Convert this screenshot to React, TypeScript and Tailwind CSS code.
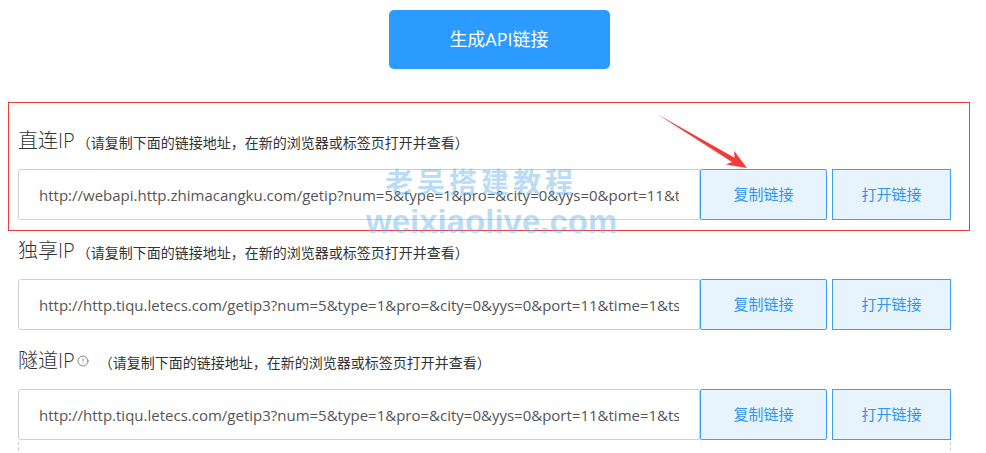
import { CircleAlert } from "lucide-react";

const FONT = { fontFamily: '"Microsoft YaHei", "Open Sans", "Noto Sans CJK SC", sans-serif' };

const HINT = "（请复制下面的链接地址，在新的浏览器或标签页打开并查看）";

type Row = { title: string; icon?: boolean; url: string };

const rows: Row[] = [
  {
    title: "直连IP",
    url: "http://webapi.http.zhimacangku.com/getip?num=5&type=1&pro=&city=0&yys=0&port=11&time=1&ts=0&ys=0&cs=0&lb=1&sb=0&pb=4&mr=1&regions=",
  },
  {
    title: "独享IP",
    url: "http://http.tiqu.letecs.com/getip3?num=5&type=1&pro=&city=0&yys=0&port=11&time=1&ts=0&ys=0&cs=0&lb=1&sb=0&pb=4&mr=1&regions=",
  },
  {
    title: "隧道IP",
    icon: true,
    url: "http://http.tiqu.letecs.com/getip3?num=5&type=1&pro=&city=0&yys=0&port=11&time=1&ts=0&ys=0&cs=0&lb=1&sb=0&pb=4&mr=1&regions=",
  },
];

function LinkRow({ row }: { row: Row }) {
  return (
    <div>
      {/* Title line */}
      <div className="flex h-7 items-baseline text-[#333]">
        <span className="text-[20px] font-light leading-7">{row.title}</span>
        {row.icon && (
          <CircleAlert size={12} strokeWidth={1.4} className="ml-[2px] self-center text-[#555]" />
        )}
        <span className={`text-[14px] ${row.icon ? "ml-[10px]" : "ml-[2px]"}`}>{HINT}</span>
      </div>

      {/* Input + buttons */}
      <div className="mt-[14px] flex h-[51px]">
        <input
          readOnly
          value={row.url}
          className="h-full w-[682px] rounded-l-[3px] border border-[#ccd0d9] bg-white px-5 text-[15px] text-[#555] outline-none"
          style={FONT}
        />
        <button className="h-full w-[127px] rounded-[2px] border border-[#3a9ff5] bg-[#e8f4fd] text-[15px] text-[#2e95f0]">
          复制链接
        </button>
        <button className="ml-[5px] h-full w-[119px] border border-[#3a9ff5] bg-[#e8f4fd] text-[15px] text-[#2e95f0]">
          打开链接
        </button>
      </div>
    </div>
  );
}

export default function App() {
  return (
    <div className="relative h-[453px] w-[986px] overflow-hidden bg-white" style={FONT}>
      <div className="flex justify-center pl-[12px] pt-[10px]">
        <button className="h-[59px] w-[221px] rounded-[5px] bg-[#2b9bff] text-[18px] text-white">
          生成API链接
        </button>
      </div>

      <div className="ml-[18px] mt-[58px] flex w-[933px] flex-col gap-[17px]">
        {rows.map((r) => (
          <LinkRow key={r.title} row={r} />
        ))}
        <div className="-mt-[15px] h-[14px] border-x border-dashed border-[#ccc]" />
      </div>

      {/* Annotation: red box */}
      <div className="pointer-events-none absolute left-[8px] top-[102px] h-[129px] w-[962px] border border-[#ef3b3b]" />

      {/* Annotation: red arrow */}
      <svg className="pointer-events-none absolute left-0 top-0" width="986" height="453">
        <polygon
          points="657,114 732,161.9 725.8,164.6 747,168 734,150.8 734.6,157.7"
          fill="#f03c3c"
        />
      </svg>

      {/* Watermark */}
      <div className="pointer-events-none absolute left-[385px] top-[164px] select-none">
        <div
          className="text-[28px] font-bold leading-[34px] tracking-[4px] text-[rgba(100,175,230,0.45)]"
          style={{ fontFamily: '"Noto Sans CJK SC", sans-serif' }}
        >
          老吴搭建教程
        </div>
        <div
          className="-ml-[19px] mt-[4px] text-[33px] font-bold leading-[40px] text-[rgba(100,175,230,0.45)]"
          style={{ fontFamily: '"Liberation Sans", sans-serif' }}
        >
          weixiaolive.com
        </div>
      </div>
    </div>
  );
}
